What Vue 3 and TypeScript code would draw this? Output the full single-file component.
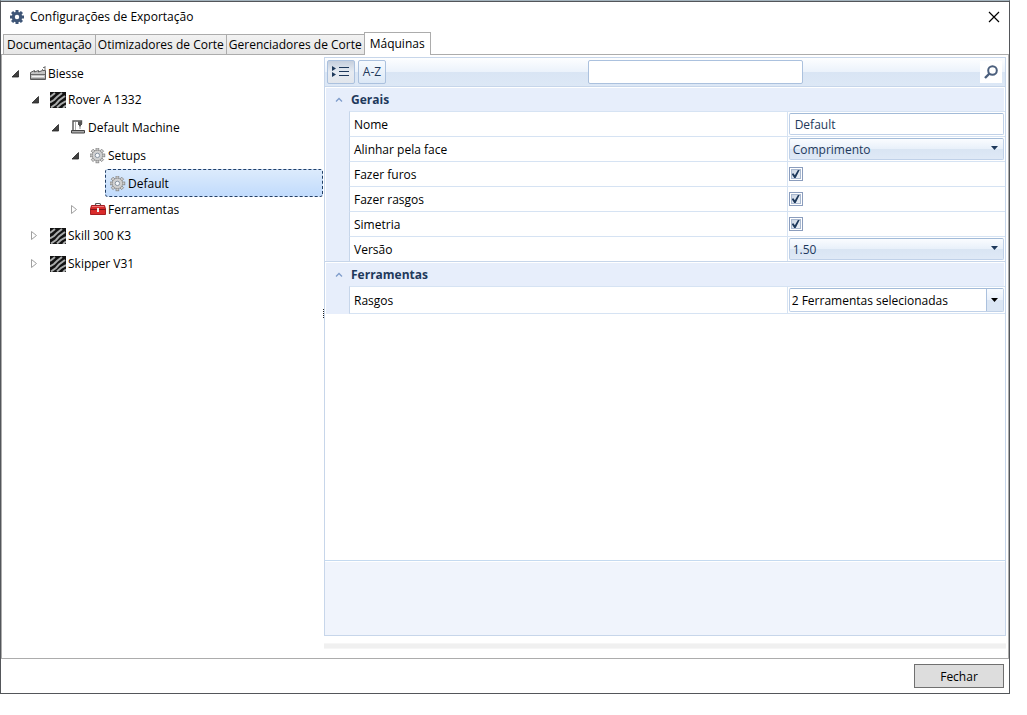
<script setup lang="ts">
import { ref } from 'vue'

type IconName = 'factory' | 'hatch' | 'machine' | 'gear' | 'toolbox'

interface TreeNode {
  label: string
  icon: IconName
  level: number
  state: 'open' | 'closed' | 'leaf'
  short?: boolean
}

interface Property {
  id: string
  label: string
  kind: 'text' | 'select' | 'check' | 'multi'
  value: string
}

interface Group {
  title: string
  items: Property[]
}

const tabs = ['Documentação', 'Otimizadores de Corte', 'Gerenciadores de Corte', 'Máquinas']
const activeTab = ref('Máquinas')
const selected = ref('Default')
const search = ref('')

const nodes: TreeNode[] = [
  { label: 'Biesse', icon: 'factory', level: 0, state: 'open', short: true },
  { label: 'Rover A 1332', icon: 'hatch', level: 1, state: 'open' },
  { label: 'Default Machine', icon: 'machine', level: 2, state: 'open' },
  { label: 'Setups', icon: 'gear', level: 3, state: 'open' },
  { label: 'Default', icon: 'gear', level: 4, state: 'leaf' },
  { label: 'Ferramentas', icon: 'toolbox', level: 3, state: 'closed', short: true },
  { label: 'Skill 300 K3', icon: 'hatch', level: 1, state: 'closed' },
  { label: 'Skipper V31', icon: 'hatch', level: 1, state: 'closed' },
]

const groups: Group[] = [
  {
    title: 'Gerais',
    items: [
      { id: 'nome', label: 'Nome', kind: 'text', value: 'Default' },
      { id: 'face', label: 'Alinhar pela face', kind: 'select', value: 'Comprimento' },
      { id: 'furos', label: 'Fazer furos', kind: 'check', value: '' },
      { id: 'fazer-rasgos', label: 'Fazer rasgos', kind: 'check', value: '' },
      { id: 'simetria', label: 'Simetria', kind: 'check', value: '' },
      { id: 'versao', label: 'Versão', kind: 'select', value: '1.50' },
    ],
  },
  {
    title: 'Ferramentas',
    items: [{ id: 'rasgos', label: 'Rasgos', kind: 'multi', value: '2 Ferramentas selecionadas' }],
  },
]

const teeth = [0, 45, 90, 135, 180, 225, 270, 315]
</script>

<template>
  <div class="screen">
    <main class="window">
      <header class="titlebar">
        <svg class="title-icon" viewBox="0 0 16 16" width="16" height="16" aria-hidden="true">
          <g fill="#3f5677">
            <rect v-for="a in teeth" :key="a" x="6.5" y="1" width="3" height="4" :transform="`rotate(${a} 8 8)`" />
          </g>
          <circle cx="8" cy="8" r="3.7" fill="none" stroke="#3f5677" stroke-width="3" />
        </svg>
        <h1>Configurações de Exportação</h1>
        <button class="close" type="button" aria-label="Fechar janela">
          <svg viewBox="0 0 12 12" width="12" height="12"><path d="M1 1L11 11M11 1L1 11" stroke="#000" stroke-width="1.2" /></svg>
        </button>
      </header>

      <nav class="tabs" role="tablist">
        <button
          v-for="t in tabs"
          :key="t"
          type="button"
          role="tab"
          class="tab"
          :class="{ active: t === activeTab }"
          :aria-selected="t === activeTab"
          @click="activeTab = t"
        >{{ t }}</button>
      </nav>

      <section class="content">
        <ul class="tree" role="tree">
          <li
            v-for="n in nodes"
            :key="n.label"
            role="treeitem"
            class="node"
            :class="['level-' + n.level, { short: n.short }]"
            :aria-selected="n.label === selected"
          >
            <svg class="arrow" viewBox="0 0 10 10" width="10" height="10" aria-hidden="true">
              <path v-if="n.state === 'open'" d="M7.5 1.5V8H1Z" fill="#404040" stroke="#262626" stroke-width=".8" />
              <path v-else-if="n.state === 'closed'" d="M.5 .5V8.5L5.5 4.5Z" fill="#fff" stroke="#a0a0a0" />
            </svg>
            <button type="button" class="node-label" :class="{ selected: n.label === selected }" @click="selected = n.label">
              <svg v-if="n.icon === 'factory'" viewBox="0 0 16 16" width="16" height="16" aria-hidden="true">
                <path d="M.5 13.5V6.5L4.5 4.5V6L8.5 4.5V6L12.5 4.5H15.5V13.5Z" fill="#c4c4c4" stroke="#5a5a5a" />
                <path d="M1 8.5H15" stroke="#6a6a6a" />
                <path d="M2 10.5H14" stroke="#f2f2f2" />
                <path d="M1 12.5H15" stroke="#8c8c8c" />
                <path d="M12.5 4.5V3M15 4.5V0M13 1.5H15" fill="none" stroke="#777" />
              </svg>
              <svg v-else-if="n.icon === 'hatch'" viewBox="0 0 16 16" width="16" height="16" aria-hidden="true">
                <path d="M0 0H16V16H0Z" fill="#121212" />
                <path d="M0 5L5 1M0 10.5L4 8L7 5L12 1M1 15.5L6 12L9 8.5L15 4M7 15.5L11 12L16 9M13 16L16 13.5" fill="none" stroke="#a9abab" stroke-width="2" />
              </svg>
              <svg v-else-if="n.icon === 'machine'" viewBox="0 0 16 16" width="16" height="16" aria-hidden="true">
                <path d="M3 10V1H11.5V4" fill="none" stroke="#555" stroke-width="1.4" />
                <path d="M5.5 2V10" stroke="#aaa" />
                <path d="M8 1.5H12V5H11V6.5H9V5H8Z" fill="#555" />
                <path d="M10 6.5V9" stroke="#888" />
                <path d="M1.5 10.5H14.5V13H1.5Z" fill="#aaa" stroke="#444" />
              </svg>
              <svg v-else-if="n.icon === 'gear'" viewBox="0 0 16 16" width="16" height="16" aria-hidden="true">
                <g fill="#d0d0d0" stroke="#858585" stroke-width=".8">
                  <rect v-for="a in teeth" :key="a" x="6" y="0" width="2.8" height="4" :transform="`rotate(${a} 7.4 7.4)`" />
                </g>
                <circle cx="7.4" cy="7.4" r="5.2" fill="#d0d0d0" stroke="#8d8d8d" stroke-width=".8" />
                <circle cx="7.4" cy="7.4" r="4.3" fill="#d0d0d0" />
                <circle cx="7.4" cy="7.4" r="2.2" fill="#f5f7fa" stroke="#8a96a4" />
              </svg>
              <svg v-else viewBox="0 0 16 16" width="16" height="16" aria-hidden="true">
                <path d="M5.5 4V2.5Q5.5 1.5 6.5 1.5H9.5Q10.5 1.5 10.5 2.5V4" fill="none" stroke="#555" stroke-width="1.2" />
                <path d="M1.5 3.5H14.5L15.5 7V12.5H.5V7Z" fill="#d92b2b" stroke="#a51e22" />
                <path d="M2 4.5H14" stroke="#ee7777" />
                <path d="M.5 7.5H15.5" stroke="#801519" />
                <rect x="7" y="6" width="2" height="4" fill="#eee" />
              </svg>
              <span>{{ n.label }}</span>
            </button>
          </li>
        </ul>

        <div class="splitter" aria-hidden="true"></div>

        <div class="detail">
          <div class="property-grid">
            <div class="toolbar">
              <div class="modes">
                <button class="mode pressed" type="button" aria-label="Agrupar por categoria">
                  <svg viewBox="0 0 18 12" width="18" height="12">
                    <path d="M0 0L4 2.5L0 5ZM0 6L4 8.5L0 11Z" fill="#1e395b" />
                    <path d="M7 1.5H17M7 5.5H17M7 9.5H17" stroke="#1e395b" />
                  </svg>
                </button>
                <button class="mode" type="button">A-Z</button>
              </div>
              <span></span>
              <input v-model="search" class="search" type="text" aria-label="Pesquisar" />
              <button class="find" type="button" aria-label="Buscar">
                <svg viewBox="0 0 14 14" width="14" height="14">
                  <circle cx="8.5" cy="5.5" r="4.3" fill="none" stroke="#4b5f7d" stroke-width="2" />
                  <path d="M5.5 8.5L1 13" stroke="#4b5f7d" stroke-width="2.4" />
                </svg>
              </button>
            </div>

            <section v-for="g in groups" :key="g.title" class="group">
              <h2>
                <svg viewBox="0 0 8 6" width="8" height="6" aria-hidden="true"><path d="M1 4.5L4 1.5L7 4.5" fill="none" stroke="#7f9dcb" stroke-width="1.3" /></svg>
                {{ g.title }}
              </h2>
              <div class="rows">
                <div v-for="p in g.items" :key="p.id" class="row" :class="{ multi: p.kind === 'multi' }">
                  <label :for="p.id">{{ p.label }}</label>
                  <div class="value">
                    <input v-if="p.kind === 'text'" :id="p.id" class="field" type="text" :value="p.value" />
                    <input v-else-if="p.kind === 'check'" :id="p.id" class="check" type="checkbox" checked />
                    <template v-else>
                      <select :id="p.id" class="field drop"><option>{{ p.value }}</option></select>
                      <span class="drop-arrow" aria-hidden="true">
                        <svg viewBox="0 0 7 4" width="7" height="4"><path d="M0 0H7L3.5 4Z" fill="currentColor" /></svg>
                      </span>
                    </template>
                  </div>
                </div>
              </div>
            </section>

            <div class="description"></div>
          </div>
          <div class="bar"></div>
        </div>
      </section>

      <footer class="footer">
        <button type="button">Fechar</button>
      </footer>
    </main>
  </div>
</template>

<style>
body {
  margin: 0;
  background: #fff;
}
</style>

<style scoped>
* {
  box-sizing: border-box;
}
.screen {
  height: 100vh;
  padding: 0 17px 21px 0;
  font: 12px/16px "Open Sans", "Noto Sans", sans-serif;
  color: #000;
}
button,
input,
select {
  font: inherit;
  color: inherit;
}
svg {
  display: block;
  flex: none;
}
.window {
  height: 100%;
  min-height: 480px;
  display: flex;
  flex-direction: column;
  border: 1px solid #53565a;
  box-shadow: inset 0 1px #53565a;
  border-top-color: #a3b3bd;
  background: #fff;
}
.titlebar {
  flex: none;
  display: flex;
  align-items: center;
  height: 31px;
  padding: 0 8px;
}
h1 {
  flex: 1;
  margin: 0 0 0 5px;
  font-size: 12px;
  font-weight: 400;
}
.close {
  border: 0;
  padding: 1px;
  background: none;
}
.tabs {
  flex: none;
  display: flex;
  align-items: flex-end;
  padding-left: 2px;
  height: 22px;
}
.tab {
  height: 20px;
  margin-right: -1px;
  padding: 0 2px;
  border: 1px solid #acacac;
  border-bottom: 0;
  background: linear-gradient(#f2f2f2, #e6e6e6);
  white-space: nowrap;
}
.tab:first-child {
  padding: 0 3px;
}
.tab.active {
  position: relative;
  height: 23px;
  margin-bottom: -1px;
  padding: 0 5px;
  background: #fff;
}
.content {
  flex: 1;
  min-height: 0;
  display: grid;
  grid-template-columns: 321px 1px minmax(0, 1fr);
  border: 1px solid #acacac;
}
.tree {
  margin: 0;
  padding: 6px 0 0;
  list-style: none;
}
.node {
  display: flex;
  align-items: center;
  height: 28px;
  padding-left: 9px;
}
.node.short {
  height: 24px;
}
.level-1 { padding-left: 29px; }
.level-2 { padding-left: 49px; }
.level-3 { padding-left: 69px; }
.level-4 { padding-left: 89px; }
.arrow {
  margin: 2px 4px 0 0;
}
.node-label {
  display: flex;
  align-items: center;
  gap: 2px;
  height: 100%;
  padding: 2px 4px 0;
  border: 1px solid transparent;
  background: none;
  white-space: nowrap;
}
.node-label.selected {
  flex: 1;
  border: 1px dashed #223f66;
  border-radius: 3px;
  background: linear-gradient(#dcebfc, #c1dbfc);
}
.splitter {
  align-self: center;
  height: 9px;
  margin-top: -86px;
  border-left: 1px dotted #222;
}
.detail {
  display: flex;
  flex-direction: column;
  padding: 2px 2px 9px 0;
}
.property-grid {
  flex: 1;
  display: flex;
  flex-direction: column;
  border: 1px solid #c7d6ea;
}
.toolbar {
  flex: none;
  display: grid;
  grid-template-columns: auto 1fr 215px 1fr;
  align-items: center;
  height: 29px;
  border-bottom: 1px solid #c7d6ea;
  background: linear-gradient(#fdfeff 0, #ebf2fb 50%, #d9e5f4 51%, #dde8f6 100%);
}
.modes {
  display: flex;
  gap: 3px;
  padding-left: 2px;
}
.mode {
  display: grid;
  place-items: center;
  width: 28px;
  height: 24px;
  padding: 0;
  border: 1px solid #abc1de;
  border-radius: 2px;
  background: linear-gradient(#f6fafe, #dce8f6);
  color: #1e395b;
}
.mode.pressed {
  background: linear-gradient(#c5cfdd, #e6ebf2 50%, #e2e6ec);
}
.search {
  height: 24px;
  padding: 0 5px;
  border: 1px solid #abc1de;
  border-radius: 2px;
  background: #fff;
}
.find {
  justify-self: end;
  display: grid;
  place-items: center;
  width: 22px;
  height: 22px;
  margin-right: 3px;
  padding: 0;
  border: 0;
  background: #fff;
}
.group {
  flex: none;
  padding-left: 1px;
}
.group h2 {
  display: flex;
  align-items: center;
  gap: 8px;
  height: 24px;
  margin: 0 1px 0 0;
  padding-left: 9px;
  border-top: 1px solid #fff;
  background: #e7eefb;
  color: #1e395b;
  font-size: 12px;
  font-weight: 700;
}
.rows {
  border-left: 23px solid #e7eefb;
}
.row {
  display: grid;
  grid-template-columns: 2fr 1fr;
  height: 25px;
  border-top: 1px solid #d6e3f3;
  border-left: 1px solid #c7d6ea;
}
.row.multi {
  height: 28px;
  border-bottom: 1px solid #d6e3f3;
}
.group + .group {
  border-top: 1px solid #c7d6ea;
}
.row label {
  align-self: center;
  padding: 2px 0 0 4px;
}
.value {
  position: relative;
  display: flex;
  align-items: center;
  padding: 0 1px;
  border-left: 1px solid #d6e3f3;
}
.field {
  width: 100%;
  height: 22px;
  padding: 1px 5px 0;
  border: 1px solid #c0d1e8;
  border-top-color: #a3bbd8;
  border-radius: 2px;
  background: #fff;
  color: #1e395b;
}
.drop {
  appearance: none;
  padding: 2px 20px 0 3px;
  background: linear-gradient(#fafcff 0, #e8f0fa 50%, #d9e5f3 51%, #dfe9f6 100%);
}
.drop-arrow {
  position: absolute;
  top: 1px;
  right: 2px;
  bottom: 1px;
  width: 16px;
  display: grid;
  place-items: center;
  padding-bottom: 3px;
  color: #1e395b;
  pointer-events: none;
}
.multi .drop {
  height: 24px;
  padding-left: 2px;
  background: #fff;
  color: #000;
}
.multi .drop-arrow {
  top: 2px;
  bottom: 2px;
  width: 17px;
  padding: 0;
  border-left: 1px solid #abc1de;
  background: linear-gradient(#f8fbff 0, #eaf1fb 50%, #dbe6f4 51%);
  color: #000;
}
.check {
  appearance: none;
  position: relative;
  width: 14px;
  height: 14px;
  margin: 0;
  border: 1px solid #8b9dbd;
  background: linear-gradient(135deg, #c3cede, #f6f9fd);
  box-shadow: inset 0 0 0 1px #fff, inset 0 0 0 2px #a9b8cf;
}
.check:checked::after {
  content: "";
  position: absolute;
  inset: 2px;
  background: #1e395b;
  clip-path: polygon(0 50%, 22% 40%, 40% 65%, 78% 0, 100% 0, 50% 100%, 32% 100%);
}
.description {
  height: 75px;
  margin-top: auto;
  border-top: 1px solid #c5daf0;
  background: #f0f4fc;
  box-shadow: inset 0 1px #fff;
}
.bar {
  height: 6px;
  margin-top: 7px;
  border: solid #f6f6f6;
  border-width: 1px 0;
  background: #f0f0f0;
}
.footer {
  flex: none;
  display: flex;
  justify-content: flex-end;
  padding: 5px;
}
.footer button {
  width: 90px;
  height: 24px;
  padding: 2px 0 0;
  border: 1px solid #707070;
  background: #ddd;
}
</style>
